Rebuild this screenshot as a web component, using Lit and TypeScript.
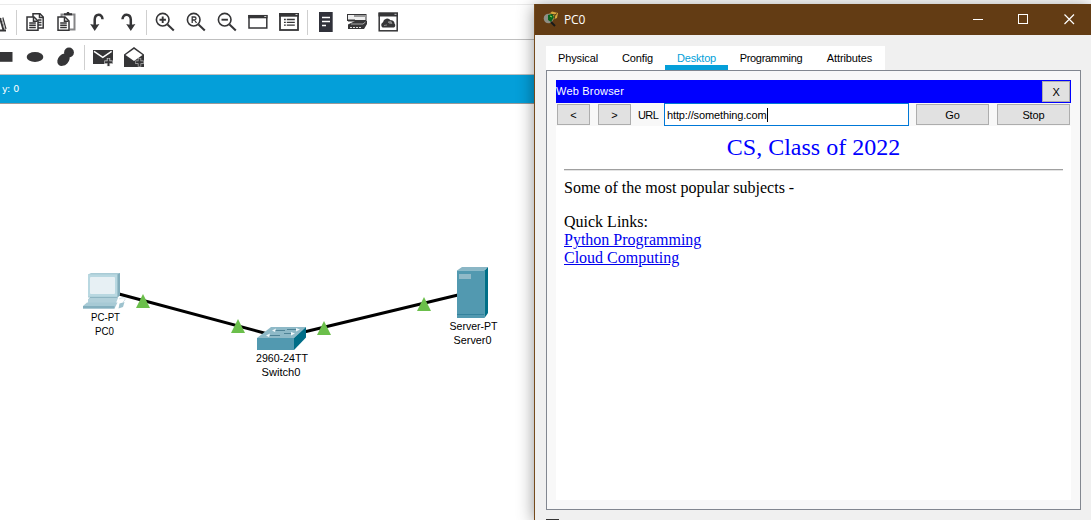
import { LitElement, html, svg, css } from "lit";
import { customElement, property } from "lit/decorators.js";

const INK = "#353537";

// Each glyph is drawn in a 31x35 toolbar cell.
const glyphs: Record<string, unknown> = {
  wizard: svg`<path d="M14 25.500h9M17 13l3.500 12" fill="none" stroke="${INK}" stroke-width="2"/><path d="M19.800 12.500l3.200 11.500" stroke="${INK}" stroke-width="1.200"/><path d="M18.500 13l3.200 11" stroke="#aaa"/>`,
  copy: svg`<g fill="#fff" stroke="${INK}" stroke-width="1.500">
    <path d="M13 8.800h7l3.200 3.200v11h-10.200z"/><path d="M19.500 8.800v3.700h3.700M18 15h3.500M18 17.500h3.500M18 20h3.500" fill="none"/>
    <path d="M7 12h7l4 4v9.300h-11z"/><path d="M13.500 12v4.300h4M9.200 18h6.600M9.200 20.300h6.600M9.200 22.600h6.600" fill="none"/></g>`,
  paste: svg`<path d="M10.500 12V9.500h13v15h-5" fill="none" stroke="#858587" stroke-width="2"/>
    <path d="M13 10.300V8.300h2.500L16 7h2l.5 1.300H21v2z" fill="${INK}"/>
    <g fill="#fff" stroke="${INK}" stroke-width="1.500"><path d="M7 12h7l4 4v9.300h-11z"/><path d="M13.500 12v4.300h4M9.200 18h6.600M9.200 20.300h6.600M9.200 22.600h6.600" fill="none"/></g>`,
  undo: svg`<path d="M20.500 14.300C20.300 8 13 8.500 12.700 14.500V20" fill="none" stroke="${INK}" stroke-width="2.500"/><path d="M8.200 19c3 1 6 1 9.200 0L12.700 26z" fill="${INK}"/>`,
  redo: svg`<path d="M9.500 14.300C9.700 8 17.500 8.500 17.800 14.500V20" fill="none" stroke="${INK}" stroke-width="2.500"/><path d="M13.200 19c3 1 6 1 9.200 0L17.800 26z" fill="${INK}"/>`,
  zoomIn: svg`<g fill="none" stroke="${INK}"><circle cx="12.700" cy="14.700" r="6.300" stroke-width="1.600"/><path d="M9.500 14.700h6.400M12.700 11.500v6.400" stroke-width="1.900"/><path d="M17.500 19.500l6.300 6" stroke-width="2"/></g>`,
  zoomReset: svg`<g fill="none" stroke="${INK}"><circle cx="12.700" cy="14.700" r="6.300" stroke-width="1.600"/><path d="M11.200 18v-6h2.300a1.500 1.500 0 0 1 0 3h-2.300M13.500 15l2 3" stroke-width="1.300"/><path d="M17.500 19.500l6.300 6" stroke-width="2"/></g>`,
  zoomOut: svg`<g fill="none" stroke="${INK}"><circle cx="12.700" cy="14.700" r="6.300" stroke-width="1.600"/><path d="M9.500 14.700h6.400" stroke-width="1.900"/><path d="M17.500 19.500l6.300 6" stroke-width="2"/></g>`,
  window: svg`<rect x="6" y="10.700" width="17.800" height="12.300" fill="#fff" stroke="${INK}" stroke-width="1.500"/><path d="M5.200 10h19.300v3.300H5.200z" fill="${INK}"/><path d="M21.300 11.500h2" stroke="#ccc"/>`,
  list: svg`<rect x="6" y="9" width="18" height="16" fill="#fff" stroke="${INK}" stroke-width="1.800"/><path d="M5 8h20v3.700H5z" fill="${INK}"/><path d="M21.500 9.500h2" stroke="#ccc"/>
    <path d="M10 14.500h1.800M10 17.300h1.800M10 20.100h1.800M12.800 14.500h8M12.800 17.300h8M12.800 20.100h8" stroke="${INK}" stroke-width="1.300"/>`,
  note: svg`<path d="M8 7h13.700v20H8z" fill="#30313a"/><path d="M11 12.500h8M11 16.500h8M11 20.500h4" stroke="#fff" stroke-width="1.500"/>`,
  devices: svg`<rect x="5.500" y="9.500" width="18.500" height="6" fill="#eee" stroke="${INK}"/><path d="M6 14.500h7v2H6z" fill="${INK}"/><path d="M12 10h12v2H12z" fill="#999"/>
    <path d="M9 18l4-2h12v3l-3 5H6v-4.500z" fill="${INK}"/><path d="M9 19h12l2.500-2" stroke="#aaa" fill="none"/><path d="M8 22.500h12" stroke="#ddd" stroke-dasharray="2 1"/>`,
  cloud: svg`<rect x="6.200" y="8.300" width="18" height="17.500" fill="#fff" stroke="${INK}" stroke-width="1.500"/><path d="M5.500 7.500h19.500v4H5.500z" fill="${INK}"/><path d="M21.500 9.300h2" stroke="#ccc"/>
    <path d="M9.500 22.500a3 3 0 0 1 .5-5.200a4.200 4.200 0 0 1 7.500-2a3.200 3.200 0 0 1 4 3.300a2.400 2.400 0 0 1-.5 3.900z" fill="${INK}"/><path d="M15 17l3-.5 1 2-3-.5zM11 20.500l3-.5" fill="#888" stroke="#888"/>`,
  rect: svg`<path d="M5 12h18.500v9.800H5z" fill="${INK}"/>`,
  ellipse: svg`<ellipse cx="15" cy="17" rx="8.300" ry="5" fill="${INK}"/>`,
  blob: svg`<circle cx="18" cy="12.500" r="4.900" fill="${INK}"/><ellipse cx="12.500" cy="19.700" rx="7" ry="5.300" transform="rotate(-45 12.500 19.700)" fill="${INK}"/>`,
  mail: svg`<path d="M5 10h20v14H5z" fill="${INK}"/><path d="M6 11.300l8.800 6 8.800-6" fill="none" stroke="#fff" stroke-width="1.500"/><path d="M20.500 18v8.500M16.300 22.200h8.500" stroke="#ddd" stroke-width="3.400"/><path d="M20.500 18.500v7.500M16.800 22.200h7.500" stroke="${INK}" stroke-width="1.900"/>`,
  mailOpen: svg`<path d="M5 14.500L15 7l10 7.500V27H5z" fill="${INK}"/><path d="M6.500 15L15 9l8.500 6-8.500 6z" fill="#fff"/><path d="M20.500 18v8.500M16.300 22.200h8.500" stroke="#bbb" stroke-width="3.400"/><path d="M20.500 18.500v7.500M16.800 22.200h7.500" stroke="${INK}" stroke-width="2"/>`,
};

@customElement("tool-bar")
class ToolBar extends LitElement {
  @property({ attribute: false }) groups: string[][] = [];
  static styles = css`
    :host { display: flex; height: 34px; background: #fff; border-bottom: 1px solid #bfbfbf; overflow: hidden; }
    .group { display: flex; flex: none; }
    .group + .group::before { content: ""; width: 1px; height: 25px; margin: 5px 3px 0 2px; background: #cfcfcf; }
    svg { width: 31px; height: 35px; flex: none; display: block; }
  `;
  render() {
    return this.groups.map((g) => html`<div class="group">${g.map((n) => html`<svg viewBox="0 0 31 35">${glyphs[n]}</svg>`)}</div>`);
  }
}

@customElement("network-canvas")
class NetworkCanvas extends LitElement {
  static styles = css`
    :host { display: block; flex: 1; background: #fff; min-height: 0; }
    svg { display: block; width: 534px; height: 416px; }
    text { font: 11px "Liberation Sans", Arial, sans-serif; text-anchor: middle; fill: #000; }
  `;
  render() {
    const status = [[143, 294], [238, 319], [324, 321], [424, 297]];
    const labels: [number, number, string, number][] = [
      [105.5, 321, "PC-PT", 29], [104.500, 335, "PC0", 19], [282, 362, "2960-24TT", 52],
      [281, 376, "Switch0", 39], [473.500, 330, "Server-PT", 48], [472.500, 344, "Server0", 38],
    ];
    return html`<svg viewBox="0 104 534 416">
      <path d="M119 294L266 333.500M304 332L458 295" fill="none" stroke="#000" stroke-width="3"/>
      <path d="M88 274.500l3-1.500h29v22l-2.500 2.500H88z" fill="#a9cbd6"/><path d="M88 274.500h29.500v22H88z" fill="#b9d8e1"/><path d="M117.500 274.500l2.500-1.500v22l-2.500 2.500z" fill="#83adbb"/>
      <rect x="90" y="277" width="25" height="17" rx="1" fill="#e7f0f4"/>
      <path d="M90 297h28l-3 4H88z" fill="#8eb5c2"/><path d="M88 299l2-1h28l-2 5H88z" fill="#b1d0da"/>
      <path d="M87 302.500h30.500l-3 6H83v-2.500z" fill="#a7cad5"/><path d="M83 306h31.500v2.500H83z" fill="#83afbe"/>
      <path d="M119.500 303.500l5-1.500-1.500 5-4.500 1.500z" fill="#9dc2ce"/><path d="M119 299c6-3 8 0 4 3" fill="none" stroke="#d3e5eb"/>
      <path d="M257 338l14-11h35l-12 11z" fill="#8eb9c7"/><path d="M257 338h37v12h-37z" fill="#5299b0"/><path d="M294 338l12-11v10.500L294 350z" fill="#006d87"/>
      <path d="M275 330.500h10M287 329.500h9M270 335.500h10M284 333.500h8" stroke="#4f8396"/>
      <path d="M276 328.500l-4 2 3 1.500zM296 328l4 1.500-4 2zM270 333.500l-4 2 3 1.500zM291 332l4 1.500-4 2z" fill="#eff7fa"/>
      <path d="M457 270.500l5-3.500h26l-4 3.500z" fill="#8ab6c5"/><path d="M457 270.500h27.500V318H457z" fill="#5299b0"/><path d="M484.500 270.500l3.500-3.500v46l-3.500 5z" fill="#006f88"/>
      <path d="M459 274h12v5h-12z" fill="#91bac8"/><path d="M457 314.500h27" stroke="#34829c"/>
      ${status.map(([x, y]) => svg`<path d="M${x} ${y}l7 14h-14z" fill="#6bbf4b"/>`)}
      ${labels.map(([x, y, t, w]) => svg`<text x=${x} y=${y} textLength=${w} lengthAdjust="spacingAndGlyphs">${t}</text>`)}
    </svg>`;
  }
}

@customElement("web-browser")
class WebBrowser extends LitElement {
  static styles = css`
    :host { display: flex; flex-direction: column; width: 515px; height: 420px; color: #000; font: 11px/14px "Liberation Sans", Arial, sans-serif; }
    .title { display: flex; align-items: center; justify-content: space-between; height: 23px; box-sizing: border-box; padding-right: 1px; background: #00f; color: #fff; letter-spacing: .2px; }
    .title span { margin-top: -1px; }
    .btn { box-sizing: border-box; display: flex; align-items: center; justify-content: center; height: 21px; border: 1px solid #adadad; background: #e1e1e1; color: #000; letter-spacing: -.1px; }
    .close { width: 28px; }
    .nav { display: flex; align-items: center; height: 23px; padding: 0 1px; }
    .arrow { width: 33px; margin-right: 8px; }
    .arrow + .arrow { margin-right: 7px; }
    .label { width: 26px; white-space: nowrap; letter-spacing: -.6px; }
    .url { box-sizing: border-box; width: 245px; height: 23px; display: flex; align-items: center; border: 1px solid #0078d7; background: #fff; padding-left: 2px; margin-right: 7px; letter-spacing: -.13px; }
    .caret { width: 1px; height: 14px; background: #000; }
    .wide { width: 73px; }
    .wide + .wide { margin-left: 8px; }
    .page { flex: 1; background: #fff; padding: 7px 8px 0; font: 16px/18px "Liberation Serif", "Times New Roman", serif; }
    .heading { text-align: center; color: #00f; font-size: 24px; line-height: 28px; margin-bottom: 8px; }
    .rule { height: 1px; background: #a0a0a0; border-bottom: 1px solid #e3e3e3; margin-bottom: 8px; }
    .gap { height: 16px; }
    .link { color: #00e; text-decoration: underline; }
  `;
  render() {
    return html`
      <div class="title"><span>Web Browser</span><div class="btn close">X</div></div>
      <div class="nav">
        <div class="btn arrow">&lt;</div><div class="btn arrow">&gt;</div>
        <div class="label">URL</div>
        <div class="url">http://something.com<span class="caret"></span></div>
        <div class="btn wide">Go</div><div class="btn wide">Stop</div>
      </div>
      <div class="page">
        <div class="heading">CS, Class of 2022</div>
        <div class="rule"></div>
        <div>Some of the most popular subjects -</div>
        <div class="gap"></div>
        <div>Quick Links:</div>
        <div><span class="link">Python Programming</span></div>
        <div><span class="link">Cloud Computing</span></div>
      </div>`;
  }
}

@customElement("device-window")
class DeviceWindow extends LitElement {
  static styles = css`
    :host { position: absolute; left: 534px; top: 4px; width: 557px; height: 516px; box-sizing: border-box; border-left: 1px solid #754a1c; background: #f0f0f0; box-shadow: 0 2px 16px rgba(0,0,0,.42); }
    .caption { display: flex; align-items: center; height: 31px; background: #633c14; color: #fff; font: 12px "Open Sans", "Noto Sans", sans-serif; }
    .logo { width: 18px; height: 18px; margin: 0 4px 0 7px; }
    .name { flex: 1; letter-spacing: -.2px; }
    .controls { width: 138px; height: 31px; flex: none; }
    .tabs { display: flex; width: 339px; height: 24px; margin: 11px 0 0 11px; background: #fff; color: #000; font: 11px/25px "Liberation Sans", Arial, sans-serif; }
    .tab { box-sizing: border-box; height: 24px; text-align: center; letter-spacing: -.1px; }
    .wide { letter-spacing: -.3px; }
    .active { color: #049fd9; border-bottom: 5px solid #049fd9; letter-spacing: -.2px; }
    .panel { box-sizing: border-box; width: 535px; height: 440px; margin-left: 11px; border: 1px solid #828790; padding: 9px; background: #f8f8f8; }
    .check { width: 13px; height: 1px; margin: 9px 0 0 11px; background: #333; }
  `;
  render() {
    const tabs: [string, number, string][] = [["Physical", 64, ""], ["Config", 55, ""], ["Desktop", 63, "active"], ["Programming", 86, "wide"], ["Attributes", 71, ""]];
    return html`
      <div class="caption">
        <svg class="logo" viewBox="0 0 18 18"><path d="M7 3l3-2.500 6 1.500-1 5-5 2z" fill="#d6a63c"/><path d="M8 3l5 1 2-1.500M13 4l-1 4" stroke="#4b3818" fill="none"/><circle cx="6.500" cy="7.500" r="4.800" fill="#8d8e85"/><path d="M6 4l4-1 2 3-3 5-3-2z" fill="#08651d"/><path d="M8 5l2 1" stroke="#8be05b" fill="none"/><path d="M9 11l4 4" stroke="#17191a" stroke-width="2"/></svg>
        <span class="name">PC0</span>
        <svg class="controls" viewBox="0 0 138 31" fill="none" stroke="#fff"><path d="M20 15.500h10"/><rect x="65.500" y="10.500" width="9" height="9"/><path d="M111.500 10.500l9.500 9.500M121 10.500l-9.500 9.500" stroke-width="1.200"/></svg>
      </div>
      <div class="tabs">${tabs.map(([t, w, c]) => html`<div class="tab ${c}" style="width:${w}px">${t}</div>`)}</div>
      <div class="panel"><web-browser></web-browser></div>
      <div class="check"></div>`;
  }
}

@customElement("app-root")
class AppRoot extends LitElement {
  static styles = css`
    :host { display: block; position: relative; width: 1091px; height: 520px; overflow: hidden; background: #fff; }
    .workspace { display: flex; flex-direction: column; height: 520px; }
    .menu { height: 4px; border-bottom: 1px solid #ebebeb; background: #fff; }
    .first { margin-left: -17px; }
    .second { margin-left: -11px; height: 34px; }
    .status { height: 28px; box-sizing: content-box; border-bottom: 1px solid #999; padding-left: 2px; background: #049fd9; color: #fff; font: 9.5px/28px "DejaVu Sans", sans-serif; }
  `;
  render() {
    return html`
      <div class="workspace">
        <div class="menu"></div>
        <tool-bar class="first" .groups=${[["wizard"], ["copy", "paste", "undo", "redo"], ["zoomIn", "zoomReset", "zoomOut", "window", "list"], ["note", "devices", "cloud"]]}></tool-bar>
        <tool-bar class="second" .groups=${[["rect", "ellipse", "blob"], ["mail", "mailOpen"]]}></tool-bar>
        <div class="status">y: 0</div>
        <network-canvas></network-canvas>
      </div>
      <device-window></device-window>`;
  }
}
